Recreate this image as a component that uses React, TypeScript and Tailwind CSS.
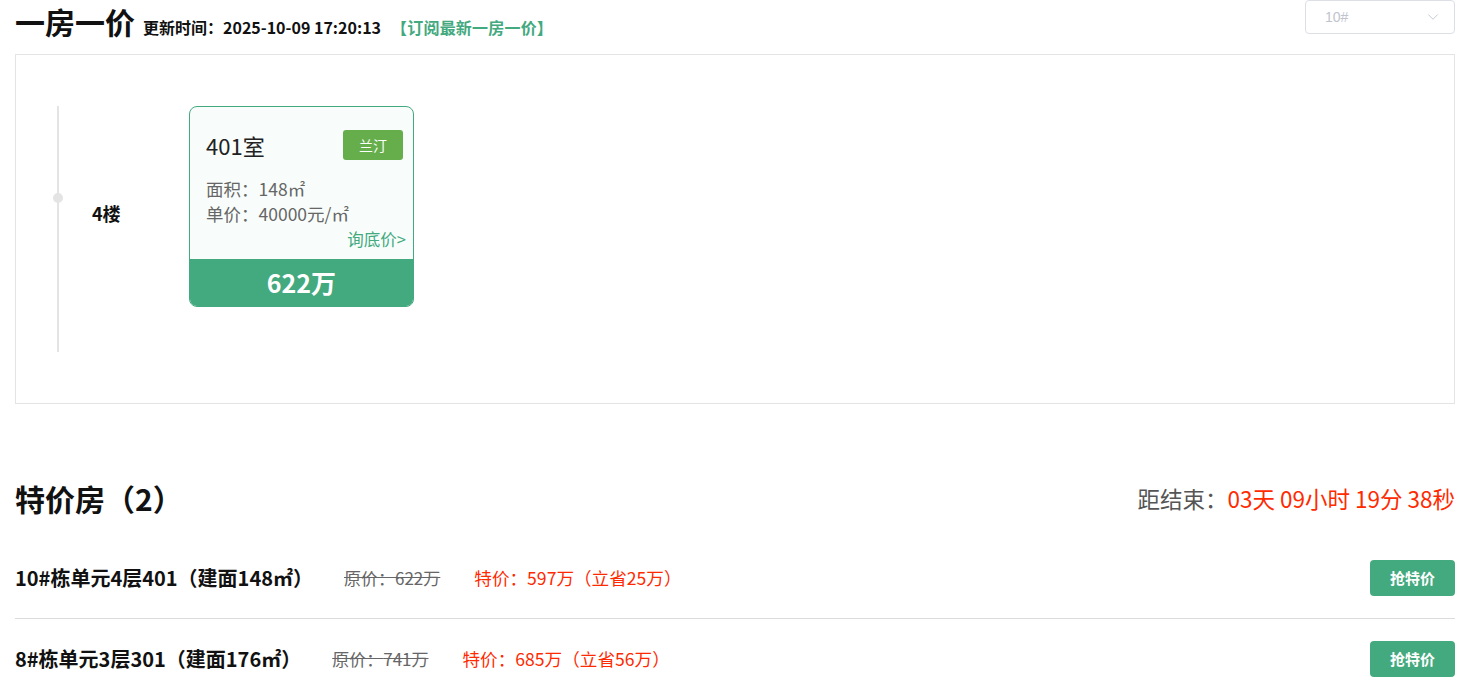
import { ChevronDown } from 'lucide-react';

const DEALS = [
  { name: '10#栋单元4层401（建面148㎡）', origin: '622万', price: '597万', save: '25万' },
  { name: '8#栋单元3层301（建面176㎡）', origin: '741万', price: '685万', save: '56万' },
];

const FONT = "font-['Noto_Sans_CJK_SC','Noto_Sans',sans-serif]";

function RoomCard() {
  return (
    <div className="w-[225px] h-[201px] rounded-[8px] border border-[#43a97e] bg-[#f8fdfb] overflow-hidden flex flex-col">
      <div className="flex-1 pl-[16px] pr-[7px] pt-[22px]">
        <div className="flex items-center justify-between">
          <span className="text-[22px] leading-[32px] text-[#222]">401室</span>
          <span className="mr-[3px] h-[30px] w-[60px] rounded-[3px] bg-[#66ae4c] text-white text-[14px] leading-[30px] text-center">
            兰汀
          </span>
        </div>
        <div className="mt-[15px] text-[17.5px] leading-[25px] text-[#666]">面积：148㎡</div>
        <div className="text-[17.5px] leading-[25px] text-[#666]">单价：40000元/㎡</div>
        <div className="text-right text-[16.5px] leading-[26px] text-[#43a97e]">询底价&gt;</div>
      </div>
      <div className="h-[47px] bg-[#43a97e] text-white text-[25px] font-bold leading-[47px] text-center">
        622万
      </div>
    </div>
  );
}

export default function App() {
  return (
    <div className={`${FONT} bg-white w-[1460px] h-[684px] overflow-hidden pl-[15px] pr-[5px] text-[#111]`}>
      {/* 一房一价 header */}
      <div className="flex items-start justify-between h-[54px]">
        <div className="flex items-baseline pt-[2px]">
          <h1 className="text-[30px] font-bold leading-[38px]">一房一价</h1>
          <span className="ml-[8px] text-[16px] font-bold">更新时间：2025-10-09 17:20:13</span>
          <span className="ml-[10px] text-[16px] font-bold text-[#43a97e] tracking-[0.2px]">【订阅最新一房一价】</span>
        </div>
        <div className="w-[150px] h-[34px] border border-[#dcdfe6] rounded-[4px] flex items-center justify-between pl-[19px] pr-[12px] font-['Liberation_Sans',sans-serif] text-[14px] text-[#c0c4cc]">
          <span>10#</span>
          <ChevronDown size={18} strokeWidth={1.2} />
        </div>
      </div>

      {/* floor panel */}
      <div className="h-[350px] border border-[#e4e4e4] pt-[51px] pl-[41px]">
        <div className="flex items-start">
          <div className="relative w-[2px] h-[246px] bg-[#e4e4e4]">
            <span className="absolute left-[-4px] top-[87px] w-[10px] h-[10px] rounded-full bg-[#e4e4e4]" />
          </div>
          <div className="w-[130px] pl-[33px] pt-[95px] text-[18px] font-bold leading-[24px]">4楼</div>
          <RoomCard />
        </div>
      </div>

      {/* 特价房 */}
      <div className="mt-[73px] flex items-center justify-between h-[42px]">
        <h2 className="text-[30px] font-bold leading-[40px]">特价房（2）</h2>
        <div className="text-[22.5px] leading-[32px]">
          <span className="text-[#555]">距结束：</span>
          <span className="text-[#ff2a00]">03天 09小时 19分 38秒</span>
        </div>
      </div>

      <div className="mt-[19px]">
        {DEALS.map((d, i) => (
          <div
            key={d.name}
            className={`flex items-center justify-between py-[22px] ${i === 0 ? 'border-b border-[#dcdcdc]' : ''}`}
          >
            <div className="flex items-center">
              <span className="text-[20px] font-bold leading-[30px]">{d.name}</span>
              <span className="ml-[31px] text-[17px] text-[#666] line-through">原价：{d.origin}</span>
              <span className="ml-[34px] text-[17.6px] text-[#ff2a00]">
                特价：{d.price}（立省{d.save}）
              </span>
            </div>
            <button className="w-[85px] h-[36px] rounded-[4px] bg-[#43a97e] text-white text-[15px] font-bold">
              抢特价
            </button>
          </div>
        ))}
      </div>
    </div>
  );
}
